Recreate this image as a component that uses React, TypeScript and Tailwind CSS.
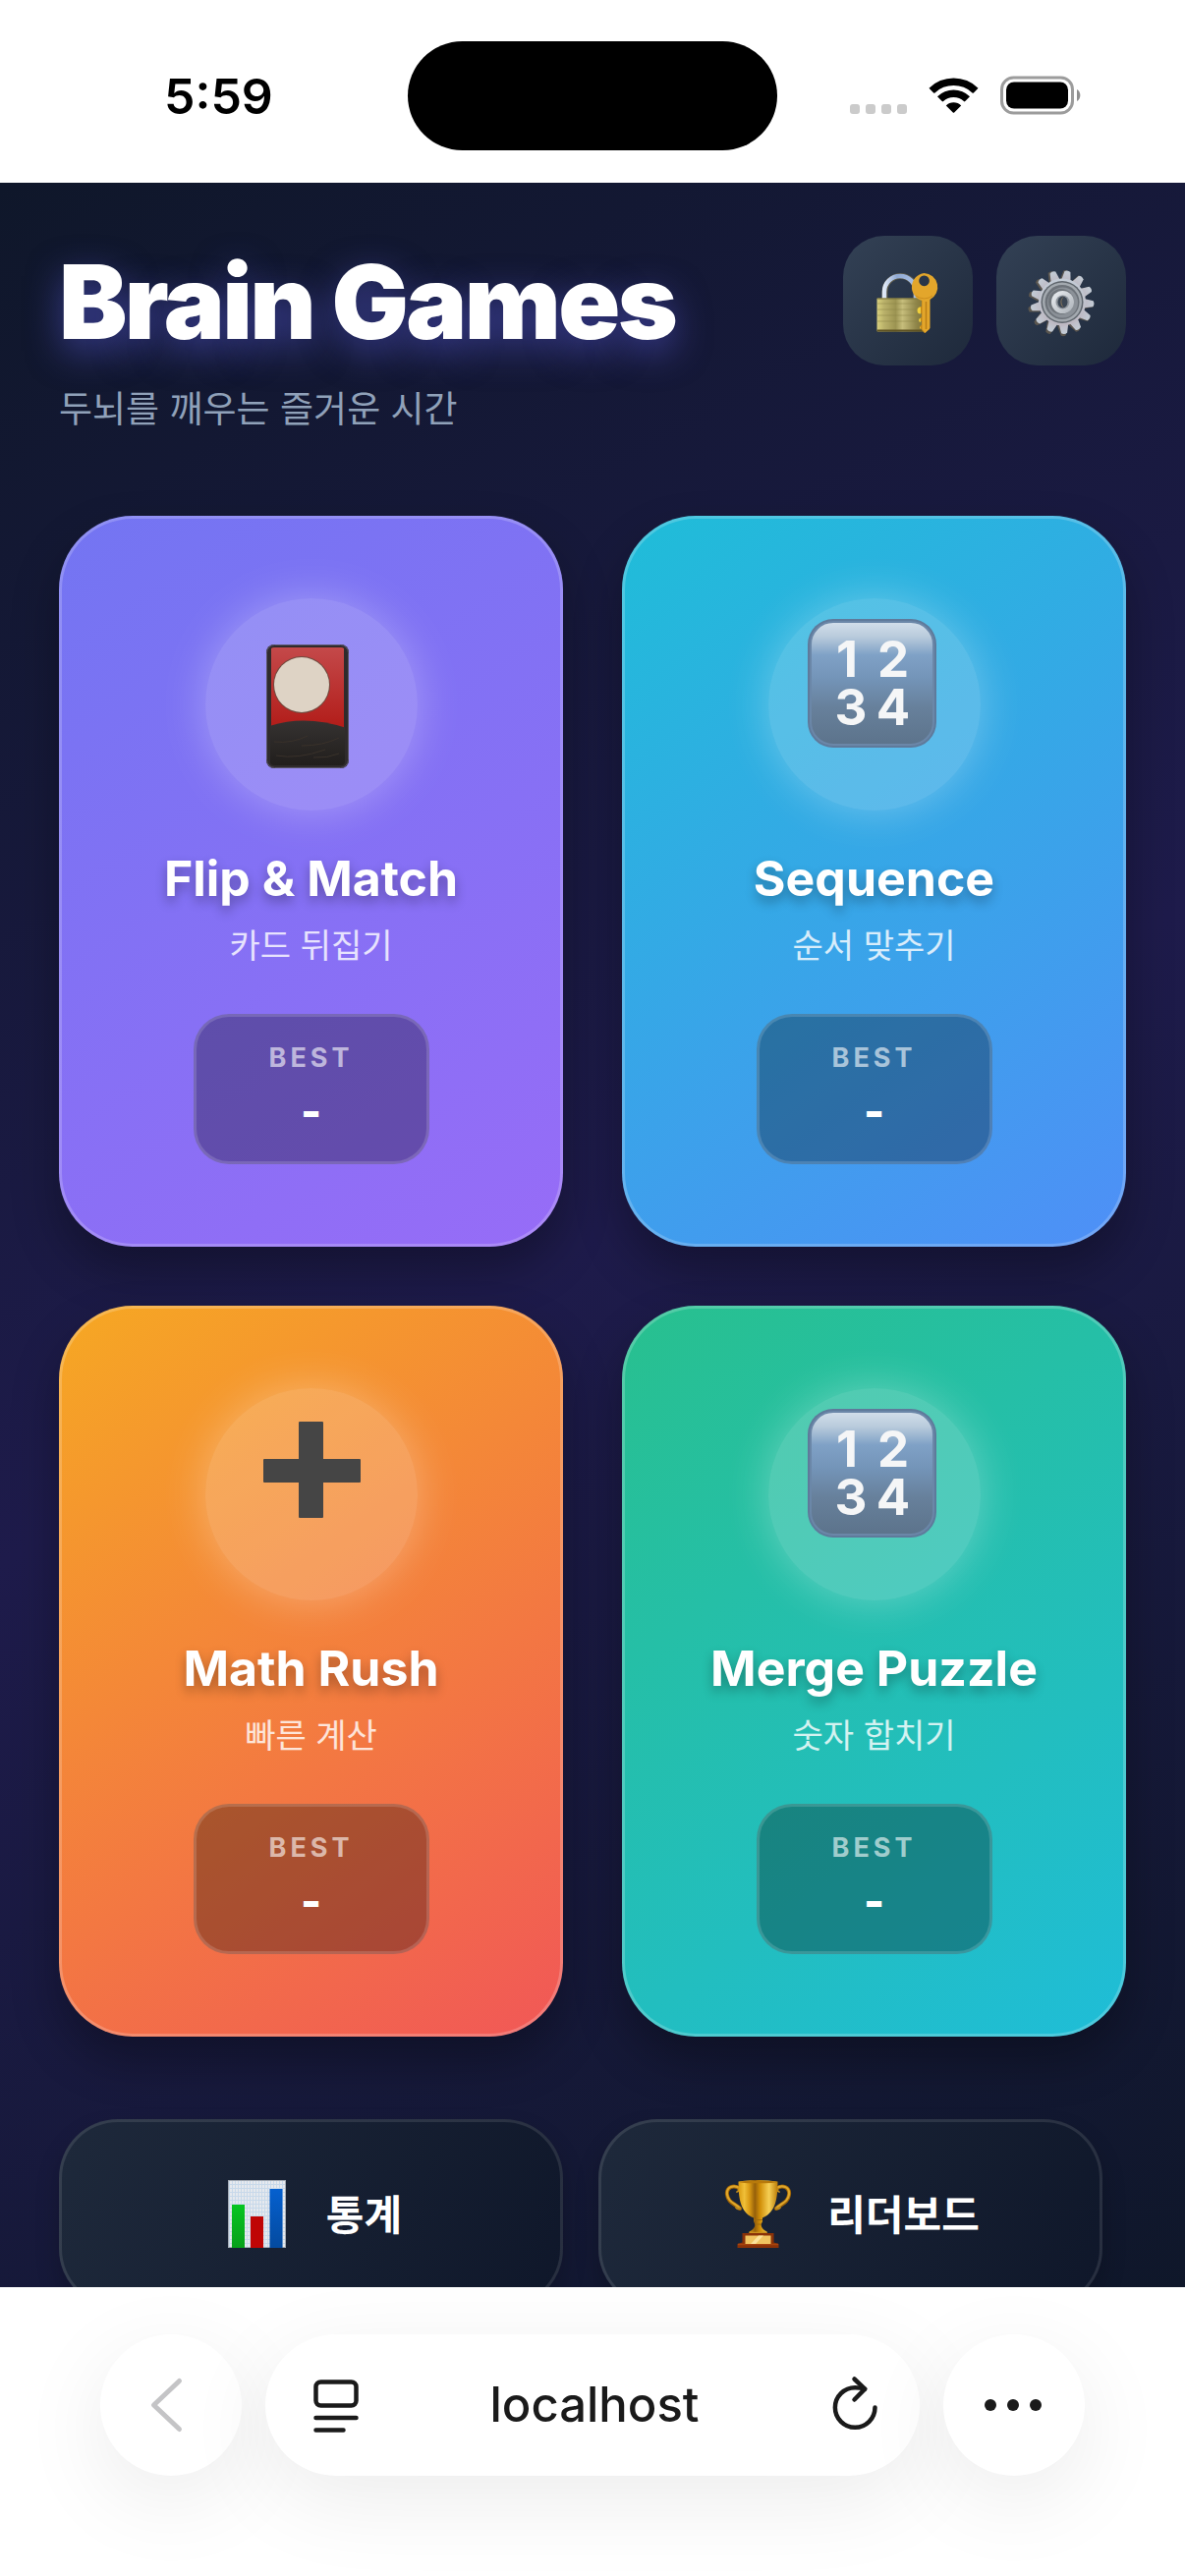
import type { ReactNode } from "react";

const GEAR_TEETH = Array.from({ length: 13 }, (_, i) => 10 + (i * 360) / 13);

function StatusBar() {
  return (
    <div className="grid h-[186px] shrink-0 grid-cols-[1fr_376px_1fr] items-center bg-white pt-2">
      <time className="pt-0.5 pl-[167px] text-[50px] leading-[60px] font-semibold text-black">5:59</time>
      <div className="h-[111px] rounded-full bg-black" />
      <div className="flex items-center justify-end gap-[22px] pr-[106px]">
        <svg width="58" height="40" viewBox="0 0 58 40" fill="#cbcbcb" aria-hidden="true">
          <rect x="0" y="29" width="10" height="10" rx="3" />
          <rect x="16" y="29" width="10" height="10" rx="3" />
          <rect x="32" y="29" width="10" height="10" rx="3" />
          <rect x="48" y="29" width="10" height="10" rx="3" />
        </svg>
        <svg width="51" height="40" viewBox="0 0 51 40" aria-hidden="true">
          <path d="M0.5 12.7a35.5 35.5 0 0 1 50 0l-4.6 4.8a1 1 0 0 1-1.4 0a27.5 27.5 0 0 0-38 0a1 1 0 0 1-1.4 0z" />
          <path d="M9 21.3a23.5 23.5 0 0 1 33 0l-4.7 4.8a1 1 0 0 1-1.4 0a15 15 0 0 0-20.8 0a1 1 0 0 1-1.4 0z" />
          <path d="M17.8 30.4a11 11 0 0 1 15.4 0l-7 7.1a1 1 0 0 1-1.4 0z" />
        </svg>
        <svg width="82" height="40" viewBox="0 0 82 40" aria-hidden="true">
          <rect x="1.5" y="2" width="72" height="36" rx="12" fill="none" stroke="#9c9c9c" strokeWidth="3" />
          <rect x="6" y="6.500" width="63" height="27" rx="8" />
          <path d="M78 14a7 7 0 0 1 0 12z" fill="#8f8f8f" />
        </svg>
      </div>
    </div>
  );
}

function LockKeyIcon() {
  return (
    <svg className="size-full" viewBox="0 0 132 132" aria-hidden="true">
      <defs>
        <linearGradient id="lockBody" x1="0" x2="1">
          <stop offset="0" stopColor="#d8d07e" />
          <stop offset="0.15" stopColor="#b9b069" />
          <stop offset="0.38" stopColor="#9c9452" />
          <stop offset="0.52" stopColor="#c6bd7b" />
          <stop offset="0.8" stopColor="#8f8549" />
          <stop offset="1" stopColor="#7c6f35" />
        </linearGradient>
        <linearGradient id="lockShackle" x1="0" x2="1">
          <stop offset="0" stopColor="#dfe8f6" />
          <stop offset="0.4" stopColor="#8fa9d4" />
          <stop offset="1" stopColor="#a9c0e4" />
        </linearGradient>
      </defs>
      <path d="M42.500 65V57a16 16 0 0 1 32 0v8" fill="none" stroke="#5d5a4a" strokeWidth="6" />
      <path d="M42 65V57a16 16 0 0 1 32 0v8" fill="none" stroke="url(#lockShackle)" strokeWidth="4.500" />
      <rect x="34.500" y="63.500" width="50" height="34" rx="1" fill="url(#lockBody)" />
      <path d="M35 69h49M35 75h49M35 81h49M35 87h49" stroke="#8b8347" strokeWidth="0.8" opacity="0.6" />
      <path d="M34.500 64h50" stroke="#7b7238" strokeWidth="1" />
      <path d="M34.500 96.500h50" stroke="#5e5222" strokeWidth="2" />
      <path d="M80 64v8a3.500 3.500 0 0 0 0 7v4a2 2 0 0 0 0 4v4a2 2 0 0 0 0 4v1l3 3l5-4V64z" fill="#c48618" />
      <path
        fillRule="evenodd"
        d="M82.500 38a14.300 14.300 0 0 1 6 27v29l-5 5l-3-4V66A14.300 14.300 0 0 1 82.500 38zm0 2.600a5.300 5.300 0 1 0 0.100 0z"
        fill="#e3a62b"
      />
      <path d="M84.500 67v28" stroke="#b97d17" strokeWidth="1.500" />
      <path d="M74 61a14 14 0 0 0 17 0" fill="none" stroke="#cc8e1e" strokeWidth="1" />
      <path d="M79 72.500a3.500 3.500 0 0 0 0 7zM79 84a2 2 0 0 0 0 4zM79 92a2 2 0 0 0 0 3z" fill="#f0cf3c" />
    </svg>
  );
}

function GearIcon() {
  return (
    <svg className="size-full" viewBox="0 0 132 132" aria-hidden="true">
      <defs>
        <linearGradient id="gearFace" x1="0" y1="0" x2="0" y2="1">
          <stop offset="0" stopColor="#c3ccd6" />
          <stop offset="1" stopColor="#bdb8c2" />
        </linearGradient>
        <linearGradient id="gearHub" x1="0" y1="0" x2="1" y2="1">
          <stop offset="0" stopColor="#eef1f4" />
          <stop offset="1" stopColor="#a9afb6" />
        </linearGradient>
      </defs>
      <g fill="#5b564f">
        {GEAR_TEETH.map((a) => (
          <path key={a} d="M60.500 46l2-10.500q2.500-1.500 5 0L70.500 46z" transform={`rotate(${a} 65.5 68.500)`} />
        ))}
      </g>
      <g fill="url(#gearFace)">
        {GEAR_TEETH.map((a) => (
          <path key={a} d="M62 46.500L64 36q3-2 6 0l2 10.500z" transform={`rotate(${a} 67 67.500)`} />
        ))}
        <circle cx="67" cy="67.500" r="24" />
      </g>
      <circle cx="67" cy="67.500" r="21.500" fill="#5f666d" />
      <circle cx="67" cy="67.500" r="20" fill="#a3a9af" />
      <circle cx="67" cy="67.500" r="17.500" fill="#6d737a" />
      <circle cx="67.500" cy="68" r="15.500" fill="#8b9198" />
      <circle cx="66" cy="67" r="13" fill="#6f757b" />
      <circle cx="67.500" cy="67.500" r="11.500" fill="url(#gearHub)" />
      <circle cx="67.500" cy="67.500" r="7" fill="#8f959c" />
      <ellipse cx="67.500" cy="67.500" rx="5" ry="6" fill="#3b4653" />
      <path d="M68.500 62a5 6 0 0 0 0 11a8 8 0 0 1 0-11z" fill="#8f7a5d" />
    </svg>
  );
}

function FlowerCardIcon() {
  return (
    <svg className="size-full" viewBox="0 0 216 216" aria-hidden="true">
      <defs>
        <linearGradient id="cardRed" x1="0" y1="0" x2="0" y2="1">
          <stop offset="0" stopColor="#c4494a" />
          <stop offset="1" stopColor="#b01814" />
        </linearGradient>
        <linearGradient id="cardHill" x1="0" y1="0" x2="0" y2="1">
          <stop offset="0" stopColor="#353231" />
          <stop offset="1" stopColor="#1f1c1a" />
        </linearGradient>
        <clipPath id="cardInner">
          <rect x="66" y="50" width="76" height="120" rx="4" />
        </clipPath>
      </defs>
      <rect x="62" y="47" width="84" height="126" rx="8" fill="#2f2b2c" />
      <rect x="62.500" y="47.500" width="83" height="125" rx="8" fill="none" stroke="#5a5568" strokeWidth="1" />
      <g clipPath="url(#cardInner)">
        <rect x="67" y="50" width="74" height="90" fill="url(#cardRed)" />
        <circle cx="98" cy="88" r="29" fill="#6f4a3f" />
        <circle cx="98" cy="88" r="28" fill="#ded3c5" />
        <path d="M62 131q40-14 84 2v42H62z" fill="url(#cardHill)" />
        <path
          d="M70 146q18 2 34-6M98 150q22 0 38-8M72 160q22 4 50-6M110 162q14 1 26-4"
          fill="none"
          stroke="#3a322b"
          strokeWidth="1"
        />
      </g>
    </svg>
  );
}

function KeypadIcon({ id }: { id: string }) {
  return (
    <svg className="size-full" viewBox="0 0 216 216" aria-hidden="true">
      <defs>
        <linearGradient id={id} x1="0" y1="0" x2="0" y2="1">
          <stop offset="0" stopColor="#d3dfeb" />
          <stop offset="0.12" stopColor="#b9cbdc" />
          <stop offset="0.27" stopColor="#7fa1c6" />
          <stop offset="0.45" stopColor="#7495b9" />
          <stop offset="0.7" stopColor="#67809b" />
          <stop offset="1" stopColor="#5c738b" />
        </linearGradient>
      </defs>
      <rect x="40" y="21" width="131" height="131" rx="26" fill="#5f7a9b" />
      <rect x="43" y="24" width="125" height="125" rx="23" fill={`url(#${id})`} stroke="#6b87a8" strokeWidth="2" />
      <g fill="#f5f6f7" fontFamily="Inter, sans-serif" fontSize="51" fontWeight="700" textAnchor="middle">
        <text x="80" y="80">1</text>
        <text x="127" y="80">2</text>
        <text x="84" y="129">3</text>
        <text x="127" y="129">4</text>
      </g>
    </svg>
  );
}

function PlusIcon() {
  return (
    <svg className="size-full" viewBox="0 0 216 216" fill="#454545" aria-hidden="true">
      <rect x="95" y="34" width="25" height="98" rx="1" />
      <rect x="59" y="72" width="99" height="24" rx="1" />
    </svg>
  );
}

function ChartIcon() {
  return (
    <svg width="75" height="69" viewBox="0 0 75 69" aria-hidden="true">
      <defs>
        <linearGradient id="barGreen" x1="0" y1="0" x2="0" y2="1">
          <stop offset="0" stopColor="#06c520" />
          <stop offset="1" stopColor="#08a01a" />
        </linearGradient>
        <linearGradient id="barBlue" x1="0" y1="0" x2="0" y2="1">
          <stop offset="0" stopColor="#0560cf" />
          <stop offset="1" stopColor="#044a9f" />
        </linearGradient>
        <pattern id="paper" width="3" height="4" patternUnits="userSpaceOnUse">
          <rect width="3" height="4" fill="#e6e9ee" />
          <path d="M0 0.500h3M0.500 0v4" stroke="#c8d9ea" strokeWidth="1" />
        </pattern>
      </defs>
      <rect x="8" y="0" width="59" height="69" fill="url(#paper)" />
      <rect x="8.500" y="0.500" width="58" height="68" fill="none" stroke="#a5acb5" />
      <rect x="12" y="25" width="13" height="44" fill="url(#barGreen)" />
      <rect x="31" y="37" width="13" height="32" fill="#bf0505" />
      <rect x="50.500" y="9" width="13" height="60" fill="url(#barBlue)" />
    </svg>
  );
}

function TrophyIcon() {
  return (
    <svg width="75" height="69" viewBox="0 0 75 69" aria-hidden="true">
      <defs>
        <linearGradient id="cup" x1="0" x2="1">
          <stop offset="0" stopColor="#d99a10" />
          <stop offset="0.15" stopColor="#f0bf38" />
          <stop offset="0.28" stopColor="#d99a14" />
          <stop offset="0.42" stopColor="#96600a" />
          <stop offset="0.55" stopColor="#d08e08" />
          <stop offset="0.78" stopColor="#f6cf55" />
          <stop offset="1" stopColor="#bb7c08" />
        </linearGradient>
      </defs>
      <g fill="none" strokeLinecap="round">
        <path d="M19 9C13 4 5 7 6 15c1 8 8 9 13 14M56 9c6-5 14-2 13 6c-1 8-8 9-13 14" stroke="#9a6208" strokeWidth="4" />
        <path d="M19 8.500C13 4 5 7 6 14.500c1 8 8 9 13 14M56 8.500c6-4.500 14-1.500 13 6c-1 8-8 9-13 14" stroke="#dfa62a" strokeWidth="2.200" />
        <path d="M19 28.500q-2 2-4-0.500M56 28.500q2 2 4-0.500M18 8.500q0 3-2 3.500M57 8.500q0 3 2 3.500" stroke="#c08a1c" strokeWidth="1.800" />
      </g>
      <path
        d="M17.500 1.500q20-3 40 0C57.500 17 56 33 42 38.500v3.500l-1.500 3.500q1 5 6 7v1.500h-18V52.500q5-2 6-7L33 42v-3.500C19 33 17.500 17 17.500 1.500z"
        fill="url(#cup)"
      />
      <ellipse cx="37.500" cy="2" rx="19" ry="1.300" fill="#b87a0b" />
      <path d="M33 40.500h9M34 45h7" stroke="#a06a0b" strokeWidth="1.200" />
      <path d="M28.500 53.500h18" stroke="#c98f1c" strokeWidth="1.500" />
      <path d="M21.500 54h32v9.500l5 1.500v4h-42v-4l5-1.500z" fill="#8a3208" />
      <path d="M17 65.500h41" stroke="#a8430d" strokeWidth="1.500" />
      <rect x="24.500" y="56.500" width="26" height="8.500" fill="#f0c460" />
      <path d="M30 65l8-8.500h5L35 65z" fill="#fbe29a" />
    </svg>
  );
}

type Game = {
  title: string;
  subtitle: string;
  gradient: string;
  icon: ReactNode;
};

const GAMES: Game[] = [
  {
    title: "Flip & Match",
    subtitle: "카드 뒤집기",
    gradient: "bg-[linear-gradient(145deg,#7375f2,#976cf7)]",
    icon: <FlowerCardIcon />,
  },
  {
    title: "Sequence",
    subtitle: "순서 맞추기",
    gradient: "bg-[linear-gradient(145deg,#1fbdd8,#4f8ff7)]",
    icon: <KeypadIcon id="keypadSequence" />,
  },
  {
    title: "Math Rush",
    subtitle: "빠른 계산",
    gradient: "bg-[linear-gradient(145deg,#f6a823,#f15757)]",
    icon: <PlusIcon />,
  },
  {
    title: "Merge Puzzle",
    subtitle: "숫자 합치기",
    gradient: "bg-[linear-gradient(145deg,#28c08e,#1fbdd8)]",
    icon: <KeypadIcon id="keypadMerge" />,
  },
];

function GameCard({ title, subtitle, gradient, icon }: Game) {
  return (
    <button
      type="button"
      className={`flex flex-col items-center rounded-[75px] border-3 border-white/20 bg-origin-border px-6 py-[81px] shadow-[0_24px_48px_rgba(0,0,0,0.3)] ${gradient}`}
    >
      <span className="size-[216px] rounded-full bg-white/20 shadow-[0_0_45px_rgba(255,255,255,0.3)]">{icon}</span>
      <span className="mt-9 text-[50px] leading-[66px] font-bold text-white [text-shadow:0_6px_12px_rgba(0,0,0,0.3)]">
        {title}
      </span>
      <span className="mt-3 text-[34px] leading-[48px] text-white/80">{subtitle}</span>
      <span className="mt-[45px] flex min-w-[240px] flex-col items-center rounded-[36px] border-3 border-white/15 bg-black/30 py-6">
        <span className="text-[27px] leading-[36px] font-bold tracking-[4px] text-white/60">BEST</span>
        <span className="mt-[9px] text-[45px] leading-[54px] font-extrabold text-white">-</span>
      </span>
    </button>
  );
}

function HeaderButton({ label, children }: { label: string; children: ReactNode }) {
  return (
    <button
      type="button"
      aria-label={label}
      className="size-[132px] rounded-[42px] bg-[linear-gradient(135deg,#334155,#1e293b)]"
    >
      {children}
    </button>
  );
}

function NavButton({ label, icon }: { label: string; icon: ReactNode }) {
  return (
    <button
      type="button"
      className="flex h-[192px] w-[calc((100%-60px)/2)] items-center justify-center gap-[33px] rounded-[60px] border-3 border-white/10 bg-[linear-gradient(111deg,#1e293b,#0f172a)] bg-origin-border text-[42px] leading-[60px] font-bold text-white shadow-[0_12px_24px_rgba(0,0,0,0.2)]"
    >
      {icon}
      <span className="pt-1">{label}</span>
    </button>
  );
}

function BrowserBar() {
  return (
    <nav className="flex shrink-0 gap-6 overflow-hidden bg-white px-[102px] pt-12 pb-[102px]">
      <button
        type="button"
        aria-label="Back"
        className="size-[144px] shrink-0 rounded-full bg-white shadow-[0_24px_90px_rgba(0,0,0,0.08)]"
      >
        <svg viewBox="0 0 144 144" fill="none" stroke="#c4c4c6" strokeWidth="5" strokeLinecap="round" strokeLinejoin="round" aria-hidden="true">
          <path d="M80.500 47.500L54.500 72l26 24.500" />
        </svg>
      </button>
      <div className="flex h-[144px] flex-1 items-center justify-between rounded-full bg-white pr-10 pl-11 shadow-[0_24px_90px_rgba(0,0,0,0.08)]">
        <button type="button" aria-label="Page settings">
          <svg width="52" height="60" viewBox="0 0 52 60" fill="none" stroke="#1a1a1a" strokeWidth="4.500" strokeLinecap="round" aria-hidden="true">
            <rect x="7.500" y="6.500" width="41" height="24" rx="5" />
            <path d="M7.500 43h41M7.500 55.500h28" />
          </svg>
        </button>
        <span className="text-[49px] leading-[60px] font-medium text-[#1a1a1a]">localhost</span>
        <button type="button" aria-label="Reload">
          <svg width="52" height="60" viewBox="0 0 52 60" fill="none" stroke="#1a1a1a" strokeWidth="4.500" strokeLinecap="round" strokeLinejoin="round" aria-hidden="true">
            <path d="M46.500 32.500a20.300 20.300 0 1 1-20.300-20.300q5 0 10 1.500" />
            <path d="M25.500 3.500l10.700 10.200L25.500 24.500" />
          </svg>
        </button>
      </div>
      <button
        type="button"
        aria-label="More"
        className="size-[144px] shrink-0 rounded-full bg-white shadow-[0_24px_90px_rgba(0,0,0,0.08)]"
      >
        <svg viewBox="0 0 144 144" fill="#1a1a1a" aria-hidden="true">
          <circle cx="48" cy="72" r="6" />
          <circle cx="71" cy="72" r="6" />
          <circle cx="94" cy="72" r="6" />
        </svg>
      </button>
    </nav>
  );
}

export default function App() {
  return (
    <div className="flex h-screen flex-col bg-white font-['Inter','Noto_Sans_CJK_KR',sans-serif]">
      <StatusBar />
      <main className="min-h-0 flex-1 overflow-hidden bg-[linear-gradient(151deg,#0f172a,#1e1b4b_50%,#0f172a)] px-[60px] pt-[54px]">
        <header className="flex items-start justify-between">
          <div>
            <h1 className="text-[104px] leading-[134px] font-black tracking-tight whitespace-nowrap text-white [text-shadow:0_12px_36px_rgba(99,102,241,0.5)]">
              Brain Games
            </h1>
            <p className="mt-4 text-[37px] leading-[54px] text-slate-400">두뇌를 깨우는 즐거운 시간</p>
          </div>
          <div className="flex gap-6">
            <HeaderButton label="Login">
              <LockKeyIcon />
            </HeaderButton>
            <HeaderButton label="Settings">
              <GearIcon />
            </HeaderButton>
          </div>
        </header>
        <section className="mt-[81px] grid grid-cols-2 gap-[60px]">
          {GAMES.map((game) => (
            <GameCard key={game.title} {...game} />
          ))}
        </section>
        <div className="mt-[84px] flex gap-9">
          <NavButton label="통계" icon={<ChartIcon />} />
          <NavButton label="리더보드" icon={<TrophyIcon />} />
        </div>
      </main>
      <BrowserBar />
    </div>
  );
}
